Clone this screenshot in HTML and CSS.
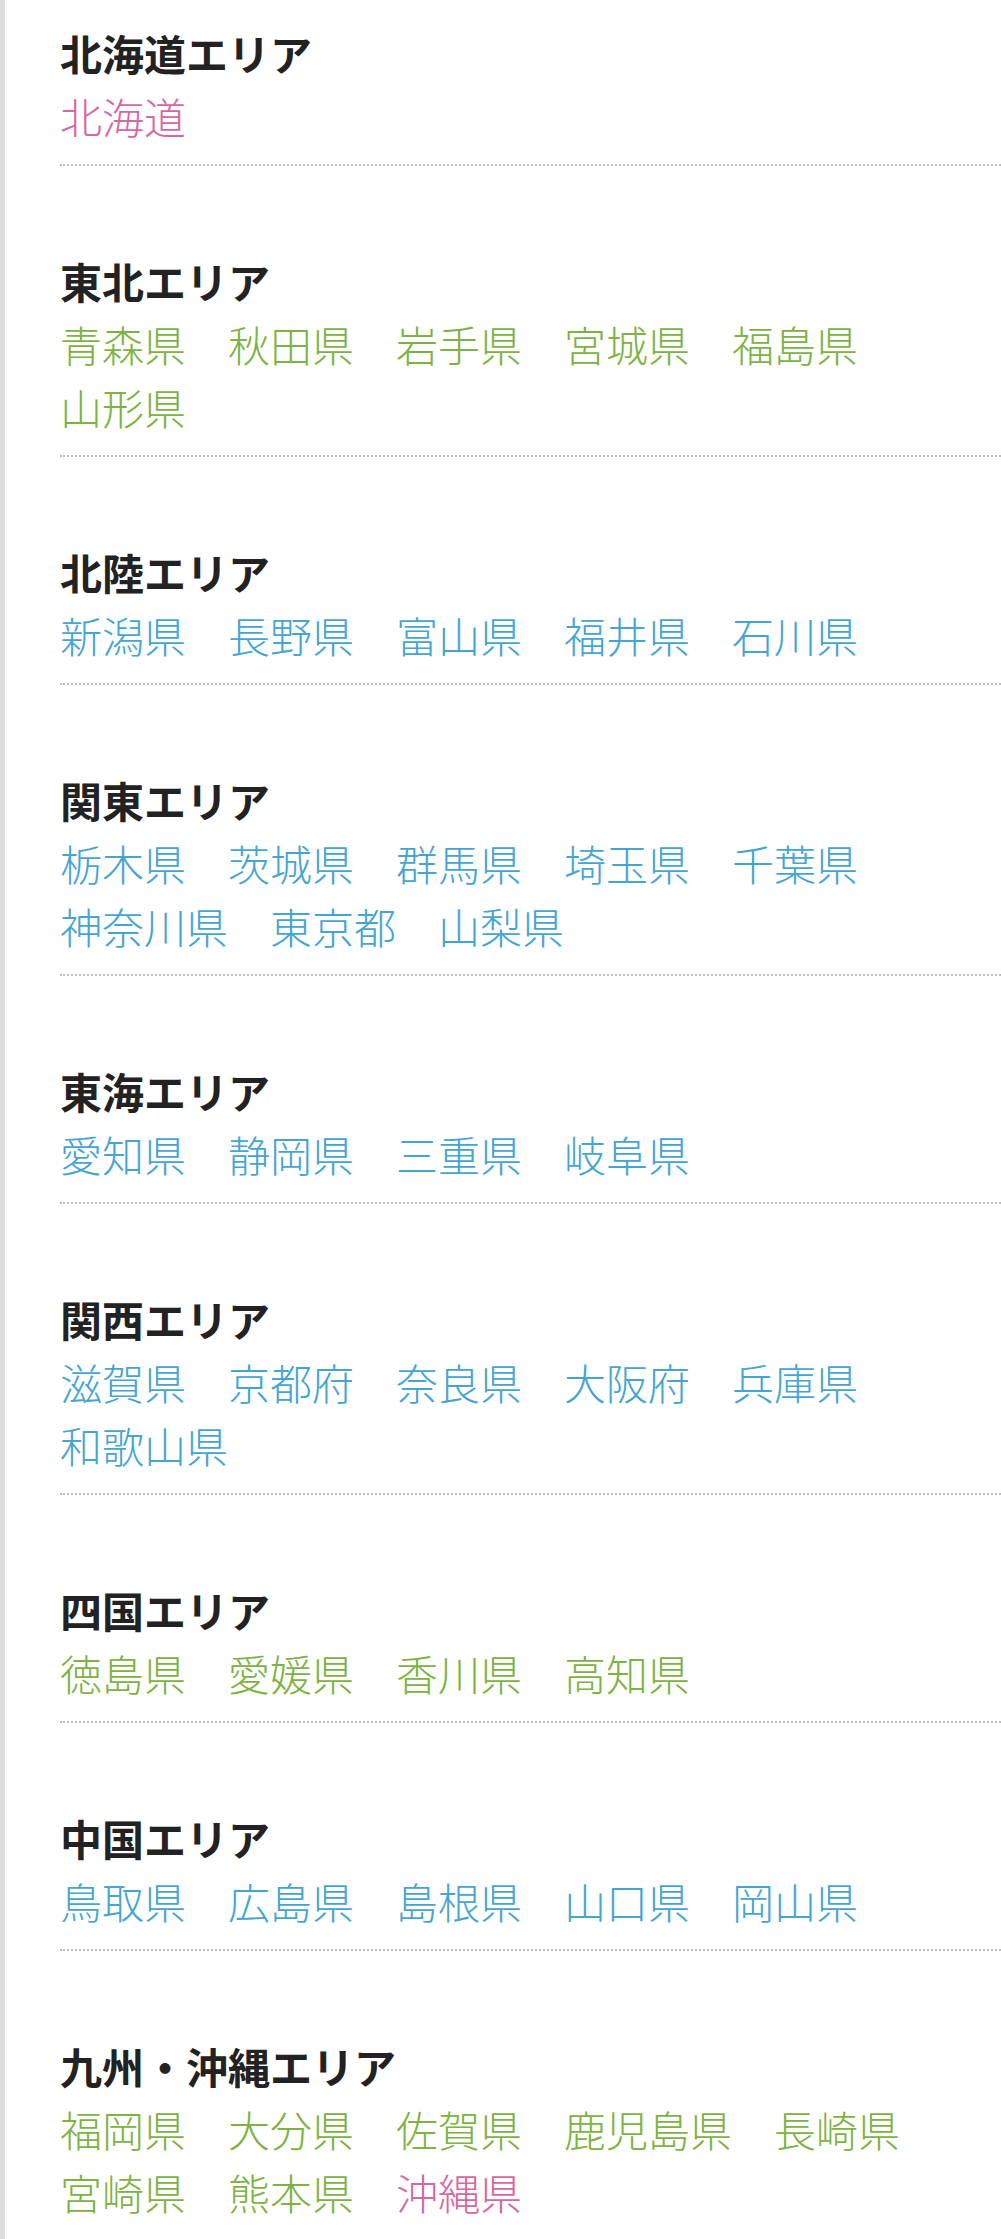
FILE: index.html
```html
<!DOCTYPE html>
<html lang="ja">
<head>
    <meta charset="UTF-8">
    <title>エリアから探す</title>
    <link rel="stylesheet" href="styles.css">
</head>
<body>
<div class="areas">
    <div class="area">
        <h2>北海道エリア</h2>
        <ul class="prefs">
            <li class="pink">北海道</li>
        </ul>
    </div>
    <div class="area">
        <h2>東北エリア</h2>
        <ul class="prefs green">
            <li>青森県</li>
            <li>秋田県</li>
            <li>岩手県</li>
            <li>宮城県</li>
            <li>福島県</li>
            <li>山形県</li>
        </ul>
    </div>
    <div class="area">
        <h2>北陸エリア</h2>
        <ul class="prefs blue">
            <li>新潟県</li>
            <li>長野県</li>
            <li>富山県</li>
            <li>福井県</li>
            <li>石川県</li>
        </ul>
    </div>
    <div class="area">
        <h2>関東エリア</h2>
        <ul class="prefs blue">
            <li>栃木県</li>
            <li>茨城県</li>
            <li>群馬県</li>
            <li>埼玉県</li>
            <li>千葉県</li>
            <li>神奈川県</li>
            <li>東京都</li>
            <li>山梨県</li>
        </ul>
    </div>
    <div class="area">
        <h2>東海エリア</h2>
        <ul class="prefs blue">
            <li>愛知県</li>
            <li>静岡県</li>
            <li>三重県</li>
            <li>岐阜県</li>
        </ul>
    </div>
    <div class="area">
        <h2>関西エリア</h2>
        <ul class="prefs blue">
            <li>滋賀県</li>
            <li>京都府</li>
            <li>奈良県</li>
            <li>大阪府</li>
            <li>兵庫県</li>
            <li>和歌山県</li>
        </ul>
    </div>
    <div class="area">
        <h2>四国エリア</h2>
        <ul class="prefs green">
            <li>徳島県</li>
            <li>愛媛県</li>
            <li>香川県</li>
            <li>高知県</li>
        </ul>
    </div>
    <div class="area">
        <h2>中国エリア</h2>
        <ul class="prefs blue">
            <li>鳥取県</li>
            <li>広島県</li>
            <li>島根県</li>
            <li>山口県</li>
            <li>岡山県</li>
        </ul>
    </div>
    <div class="area">
        <h2>九州・沖縄エリア</h2>
        <ul class="prefs green">
            <li>福岡県</li>
            <li>大分県</li>
            <li>佐賀県</li>
            <li>鹿児島県</li>
            <li>長崎県</li>
            <li>宮崎県</li>
            <li>熊本県</li>
            <li class="pink">沖縄県</li>
        </ul>
    </div>
</div>
</body>
</html>
```

FILE: styles.css
```css
body,h2,ul,li {
    margin: 0;
    padding: 0;
    list-style: none;
}
body {
    background: #fff;
    font-family: "Noto Sans CJK JP", "Noto Sans", sans-serif;
    font-size: 42px;
    line-height: 63px;
}
.areas {
    border-left: 5px solid #ddd;
    padding: 21px 0 0 55px;
    min-height: 2239px;
    box-sizing: border-box;
}
.area {
    padding-bottom: 17px;
    border-bottom: 2px dotted #bdbdbd;
    margin-bottom: 83px;
}
.area h2 {
    font-size: 42px;
    font-weight: bold;
    color: #222;
}
.prefs {
    display: flex;
    flex-wrap: wrap;
    font-weight: 300;
}
.prefs li {
    margin-right: 42px;
}
.green li {
    color: #7cb342;
}
.blue li {
    color: #45a5d2;
}
.prefs li.pink {
    color: #d8669f;
}
```
